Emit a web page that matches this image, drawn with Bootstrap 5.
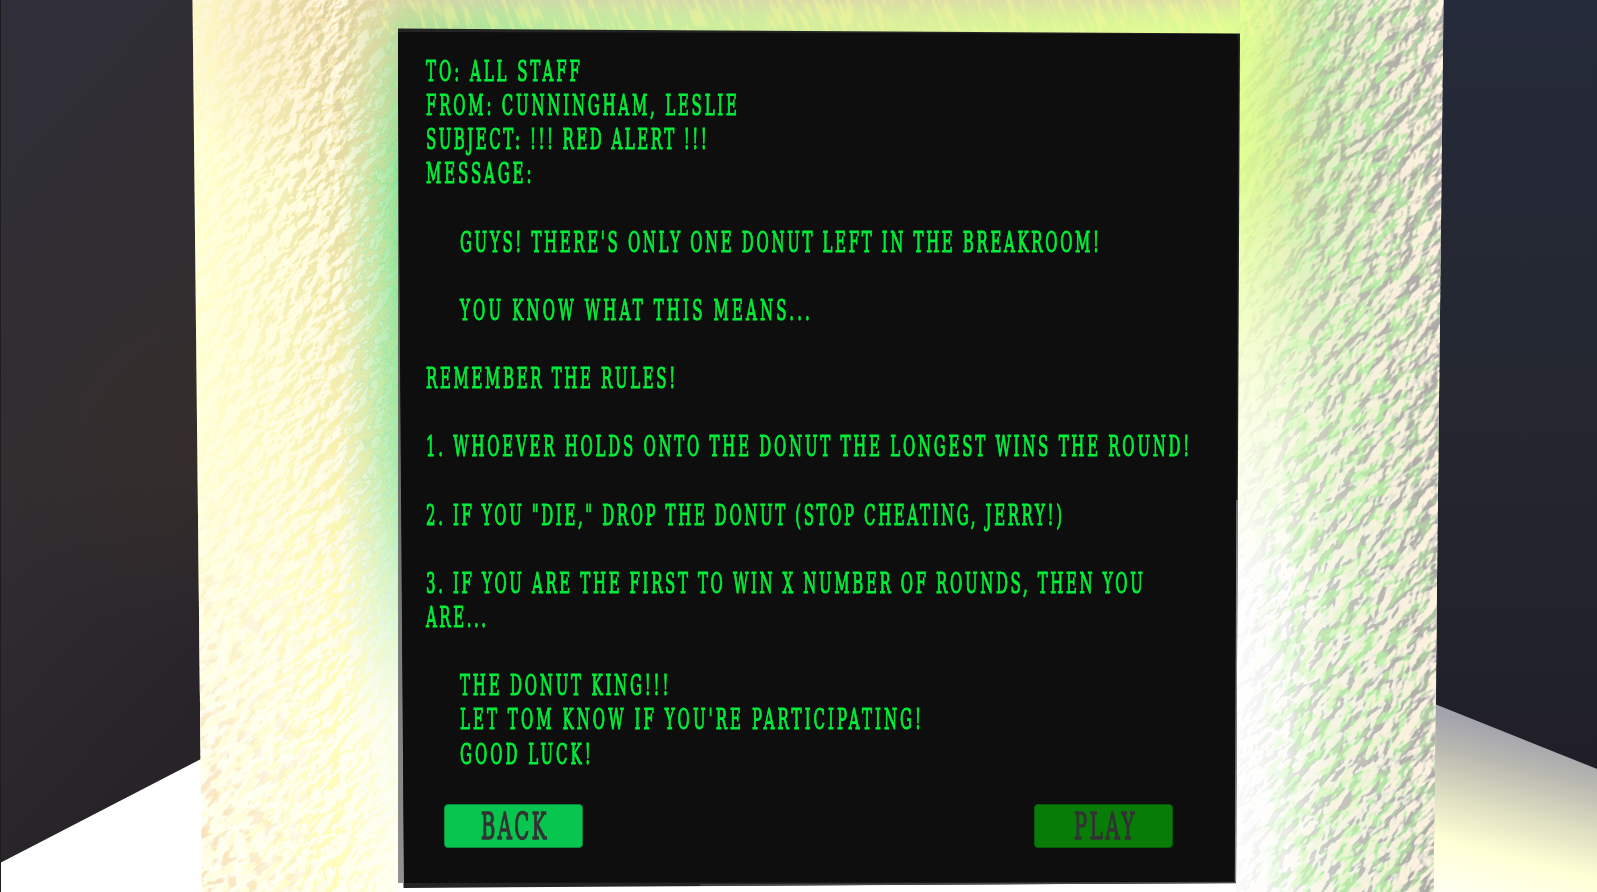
<!DOCTYPE html>
<html lang="en">
<head>
<meta charset="utf-8">
<meta name="viewport" content="width=device-width, initial-scale=1">
<title>Donut King</title>
<link href="https://cdn.jsdelivr.net/npm/bootstrap@5.3.0/dist/css/bootstrap.min.css" rel="stylesheet">
<style>
  body { width: 1597px; height: 892px; background: #fff; }
  .scene { width: 1597px; height: 892px; }
  .memo { width: 842px; height: 892px; margin-left: 398px; padding: 53.8px 28px 0; color: #00ee38;
    font-family: "DejaVu Serif", serif; }
  .memo-line { height: 34.15px; line-height: 35.5px; font-size: 28.8px; white-space: pre; }
  .memo-line.inset { padding-left: 34px; }
  .fit { display: inline-block; transform: scaleX(.52); transform-origin: 0 50%; -webkit-text-stroke: 1.15px currentColor; }
  .memo-actions { padding: 33.5px 39.2px 0 18.2px; }
  .memo .btn { width: 138.5px; height: 44px; padding: 0; border-radius: 4px; color: #333; text-align: left;
    font: 37.6px/43.5px "DejaVu Serif", serif; white-space: pre; display: block; }
  .btn-back { background: #07c64f; border: 1px solid #078b3b; }
  .btn-play { background: #077d07; border: 1px solid #075b08; }
  .memo .btn .fit { line-height: 43.5px; vertical-align: top; -webkit-text-stroke-width: 1.6px; }
</style>
</head>
<body class="m-0 overflow-hidden">
<main class="scene position-relative overflow-hidden">
  <svg class="position-absolute top-0 start-0" width="1597" height="892" viewBox="0 0 1597 892" aria-hidden="true">
    <defs>
      <linearGradient id="wallL" x1="0" y1="0" x2=".25" y2="1">
        <stop offset="0" stop-color="#302f39"/><stop offset=".55" stop-color="#312d30"/><stop offset="1" stop-color="#272329"/>
      </linearGradient>
      <radialGradient id="warm" gradientUnits="userSpaceOnUse" cx="200" cy="450" r="200">
        <stop offset="0" stop-color="#3a302b" stop-opacity=".6"/><stop offset="1" stop-color="#3a302b" stop-opacity="0"/>
      </radialGradient>
      <linearGradient id="wallR" x1="0" y1="0" x2="0" y2="1">
        <stop offset="0" stop-color="#252a3a"/><stop offset=".55" stop-color="#24272f"/><stop offset="1" stop-color="#201f28"/>
      </linearGradient>
      <linearGradient id="floorR" gradientUnits="userSpaceOnUse" x1="1500" y1="728" x2="1458" y2="892">
        <stop offset="0" stop-color="#a3a3ad"/><stop offset=".2" stop-color="#b9b9b1"/><stop offset=".5" stop-color="#e3e3c4"/><stop offset=".72" stop-color="#ffffd5"/><stop offset="1" stop-color="#fffff0"/>
      </linearGradient>
      <linearGradient id="stone" gradientUnits="userSpaceOnUse" x1="192" y1="0" x2="1443" y2="0">
        <stop offset="0" stop-color="#ffffd6"/><stop offset=".08" stop-color="#fffbd6"/><stop offset=".115" stop-color="#faf0c8"/><stop offset=".132" stop-color="#cfe5ad"/><stop offset=".163" stop-color="#86e394"/>
        <stop offset=".3" stop-color="#bde9a0"/><stop offset=".55" stop-color="#dcf09c"/><stop offset=".75" stop-color="#defa95"/><stop offset=".84" stop-color="#dfff92"/><stop offset=".87" stop-color="#d8f098"/><stop offset=".9" stop-color="#c5dfa2"/><stop offset=".95" stop-color="#cfd6bb"/><stop offset="1" stop-color="#d8cfc6"/>
      </linearGradient>
      <linearGradient id="washV" x1="0" y1="0" x2="0" y2="1">
        <stop offset=".2" stop-color="#fffff2" stop-opacity="0"/><stop offset=".5" stop-color="#fffff2" stop-opacity=".2"/><stop offset=".8" stop-color="#fffff4" stop-opacity=".95"/><stop offset="1" stop-color="#fffff4"/>
      </linearGradient>
      <linearGradient id="washR" x1="0" y1="0" x2="0" y2="1">
        <stop offset=".18" stop-color="#fffff0" stop-opacity="0"/><stop offset=".45" stop-color="#fffff0" stop-opacity=".85"/><stop offset=".65" stop-color="#fff"/>
      </linearGradient>
      <linearGradient id="fadeR" x1="0" y1="0" x2="1" y2="0">
        <stop offset="0" stop-color="#fff"/><stop offset=".25" stop-color="#fff"/><stop offset=".65" stop-color="#999"/><stop offset="1" stop-color="#222"/>
      </linearGradient>
      <linearGradient id="topHaze" x1="0" y1="0" x2="0" y2="1">
        <stop offset="0" stop-color="#dccfb0" stop-opacity=".65"/><stop offset="1" stop-color="#c9f595" stop-opacity="0"/>
      </linearGradient>
      <radialGradient id="peachTop" gradientUnits="userSpaceOnUse" cx="330" cy="0" r="190">
        <stop offset="0" stop-color="#f3d3a8" stop-opacity=".7"/><stop offset="1" stop-color="#f3d3a8" stop-opacity="0"/>
      </radialGradient>
      <linearGradient id="gL" gradientUnits="userSpaceOnUse" x1="192" y1="0" x2="400" y2="0">
        <stop offset="0" stop-color="#444"/><stop offset=".4" stop-color="#999"/><stop offset=".7" stop-color="#fff"/><stop offset=".8" stop-color="#aaa"/><stop offset="1" stop-color="#222"/>
      </linearGradient>
      <linearGradient id="gOlive" gradientUnits="userSpaceOnUse" x1="192" y1="0" x2="400" y2="0">
        <stop offset=".1" stop-color="#000"/><stop offset=".4" stop-color="#555"/><stop offset=".7" stop-color="#ccc"/><stop offset="1" stop-color="#333"/>
      </linearGradient>
      <linearGradient id="gR" gradientUnits="userSpaceOnUse" x1="1240" y1="0" x2="1443" y2="0">
        <stop offset="0" stop-color="#111"/><stop offset=".2" stop-color="#333"/><stop offset=".45" stop-color="#999"/><stop offset="1" stop-color="#fff"/>
      </linearGradient>
      <linearGradient id="gGreen" gradientUnits="userSpaceOnUse" x1="1240" y1="0" x2="1443" y2="0">
        <stop offset=".05" stop-color="#000"/><stop offset=".35" stop-color="#ccc"/><stop offset=".7" stop-color="#fff"/><stop offset="1" stop-color="#666"/>
      </linearGradient>
      <linearGradient id="gTop" x1="0" y1="0" x2="0" y2="1">
        <stop offset="0" stop-color="#fff"/><stop offset=".4" stop-color="#555"/><stop offset=".65" stop-color="#000"/>
      </linearGradient>
      <linearGradient id="gBottom" x1="0" y1="0" x2="0" y2="1">
        <stop offset=".5" stop-color="#000"/><stop offset="1" stop-color="#fff"/>
      </linearGradient>
      <linearGradient id="gBottomX" x1="0" y1="0" x2="1" y2="0">
        <stop offset="0" stop-color="#fff"/><stop offset="1" stop-color="#000"/>
      </linearGradient>
      <linearGradient id="side" x1="0" y1="0" x2="0" y2="1">
        <stop offset="0" stop-color="#444b40"/><stop offset=".5" stop-color="#6c7168"/><stop offset="1" stop-color="#929292"/>
      </linearGradient>
      <mask id="mL"><rect x="190" width="212" height="892" fill="url(#gL)"/></mask>
      <mask id="mOlive"><rect x="190" width="212" height="892" fill="url(#gOlive)"/></mask>
      <mask id="mLTop"><rect x="190" width="212" height="892" fill="url(#gTop)"/></mask>
      <mask id="mR"><rect x="1236" width="208" height="892" fill="url(#gR)"/></mask>
      <mask id="mGreen"><rect x="1236" width="208" height="892" fill="url(#gGreen)"/></mask>
      <mask id="mBottom"><rect x="190" width="150" height="892" fill="url(#gBottom)"/></mask>
      <mask id="mBottomX"><rect x="190" width="150" height="892" fill="url(#gBottomX)"/></mask>
      <mask id="mWashR"><rect x="1230" width="214" height="892" fill="url(#fadeR)"/></mask>
      <clipPath id="pillar"><path d="M192.5 0H1443.5L1433.5 892H202Z"/></clipPath>
      <!-- embossed plaster: lit turbulence split into highlight and shadow strokes -->
      <filter id="pale" x="0" y="0" width="1" height="1" color-interpolation-filters="sRGB">
        <feTurbulence type="fractalNoise" baseFrequency=".055 .085" numOctaves="3" seed="4"/>
        <feDiffuseLighting surfaceScale="9" lighting-color="#fff" diffuseConstant="1"><feDistantLight azimuth="80" elevation="45"/></feDiffuseLighting>
        <feColorMatrix values="0 0 0 0 1  0 0 0 0 1  0 0 0 0 .92  5 0 0 0 -3.4"/>
      </filter>
      <filter id="yellow" x="0" y="0" width="1" height="1" color-interpolation-filters="sRGB">
        <feTurbulence type="fractalNoise" baseFrequency=".055 .085" numOctaves="3" seed="4"/>
        <feDiffuseLighting surfaceScale="9" lighting-color="#fff" diffuseConstant="1"><feDistantLight azimuth="80" elevation="45"/></feDiffuseLighting>
        <feColorMatrix values="0 0 0 0 1  0 0 0 0 .99  0 0 0 0 .68  -5 0 0 0 3.2"/>
      </filter>
      <filter id="olive" x="0" y="0" width="1" height="1" color-interpolation-filters="sRGB">
        <feTurbulence type="fractalNoise" baseFrequency=".055 .085" numOctaves="3" seed="4"/>
        <feDiffuseLighting surfaceScale="9" lighting-color="#fff" diffuseConstant="1"><feDistantLight azimuth="80" elevation="45"/></feDiffuseLighting>
        <feColorMatrix values="0 0 0 0 .82  0 0 0 0 .77  0 0 0 0 .62  -5 0 0 0 2.7"/>
      </filter>
      <filter id="shade" x="0" y="0" width="1" height="1" color-interpolation-filters="sRGB">
        <feTurbulence type="fractalNoise" baseFrequency=".045 .075" numOctaves="3" seed="7"/>
        <feDiffuseLighting surfaceScale="10" lighting-color="#fff" diffuseConstant="1"><feDistantLight azimuth="80" elevation="45"/></feDiffuseLighting>
        <feColorMatrix values="0 0 0 0 .67  0 0 0 0 .66  0 0 0 0 .65  -3 0 0 0 1.8"/>
      </filter>
      <filter id="light" x="0" y="0" width="1" height="1" color-interpolation-filters="sRGB">
        <feTurbulence type="fractalNoise" baseFrequency=".045 .075" numOctaves="3" seed="7"/>
        <feDiffuseLighting surfaceScale="10" lighting-color="#fff" diffuseConstant="1"><feDistantLight azimuth="80" elevation="45"/></feDiffuseLighting>
        <feColorMatrix values="0 0 0 0 1  0 0 0 0 .95  0 0 0 0 .88  5 0 0 0 -3.5"/>
      </filter>
      <filter id="green" x="0" y="0" width="1" height="1" color-interpolation-filters="sRGB">
        <feTurbulence type="fractalNoise" baseFrequency=".05 .1" numOctaves="3" seed="21"/>
        <feColorMatrix values="0 0 0 0 .72  0 0 0 0 .98  0 0 0 0 .64  7 0 0 0 -3.2"/>
      </filter>
      <filter id="tan" x="0" y="0" width="1" height="1" color-interpolation-filters="sRGB">
        <feTurbulence type="fractalNoise" baseFrequency=".06 .13" numOctaves="3" seed="33"/>
        <feColorMatrix values="0 0 0 0 .96  0 0 0 0 .82  0 0 0 0 .62  7 0 0 0 -3.7"/>
      </filter>
      <filter id="streak" x="0" y="0" width="1" height="1" color-interpolation-filters="sRGB">
        <feTurbulence type="fractalNoise" baseFrequency=".16 .035" numOctaves="2" seed="5"/>
        <feColorMatrix values="0 0 0 0 1  0 0 0 0 .98  0 0 0 0 .6  5 0 0 0 -2.4"/>
      </filter>
    </defs>

    <rect width="1597" height="892" fill="#fff"/>
    <path d="M0 0H196L201 759L0 863Z" fill="url(#wallL)"/>
    <path d="M0 0H196L201 759L0 863Z" fill="url(#warm)"/>
    <path d="M0 0H1V892H0Z" fill="#1d1d1d"/>
    <path d="M1430 700L1597 769V892H1430Z" fill="url(#floorR)"/>
    <path d="M1440 0H1597V769L1436 704.500Z" fill="url(#wallR)"/>

    <g clip-path="url(#pillar)">
      <rect x="190" width="1256" height="892" fill="url(#stone)"/>
      <rect x="350" width="890" height="34" fill="url(#topHaze)"/>
      <rect x="190" width="340" height="200" fill="url(#peachTop)"/>
      <rect x="190" width="215" height="892" fill="url(#washV)"/>
      <g mask="url(#mWashR)"><rect x="1230" width="214" height="892" fill="url(#washR)"/></g>
      <rect x="398" y="870" width="842" height="22" fill="#fff"/>

      <g mask="url(#mR)"><g transform="rotate(-50 1340 446)">
        <rect x="850" y="-50" width="980" height="992" filter="url(#shade)"/>
      </g></g>
      <g mask="url(#mGreen)"><g transform="rotate(-50 1340 446)"><rect x="850" y="-50" width="980" height="992" filter="url(#green)" opacity=".7"/></g></g>
      <g mask="url(#mR)"><g transform="rotate(-50 1340 446)">
        <rect x="850" y="-50" width="980" height="992" filter="url(#light)"/>
      </g></g>
      <g mask="url(#mL)"><g transform="rotate(-48 300 446)" opacity=".8">
        <rect x="-190" y="-50" width="980" height="992" filter="url(#yellow)"/>
        <rect x="-190" y="-50" width="980" height="992" filter="url(#pale)"/>
      </g></g>
      <g mask="url(#mLTop)"><g mask="url(#mOlive)"><g transform="rotate(-48 300 446)">
        <rect x="-190" y="-50" width="980" height="992" filter="url(#olive)"/>
      </g></g></g>
      <g mask="url(#mBottomX)"><g mask="url(#mBottom)" opacity=".75"><g transform="rotate(-45 300 446)"><rect x="-190" y="-50" width="980" height="992" filter="url(#tan)"/></g></g></g>
      <g transform="skewX(20)" opacity=".4"><rect x="370" y="0" width="900" height="34" filter="url(#streak)"/></g>
    </g>

    <path d="M398 60L403.500 883H398Z" fill="#848484"/>
    <path d="M398 28.500L1240 33.500L1236 883L403.500 888Z" fill="#242424"/>
    <path d="M398 100L404 883H398Z" fill="url(#side)"/>
    <path d="M398 32L1237 34L1238.500 40L1234.500 882L404 883L398 100Z" fill="#0e0e0e"/>
    <path d="M1237 500L1235.500 883" stroke="#888" stroke-width="1.300"/>
    <path d="M700 885L1236 882.500" stroke="#4a4a4a" stroke-width="1.500"/>
  </svg>

  <section class="memo position-relative">
    <div class="memo-line"><span class="fit" data-w="154">TO: ALL STAFF</span></div>
    <div class="memo-line"><span class="fit" data-w="311">FROM: CUNNINGHAM, LESLIE</span></div>
    <div class="memo-line"><span class="fit" data-w="281">SUBJECT: !!! RED ALERT !!!</span></div>
    <div class="memo-line"><span class="fit" data-w="105.500">MESSAGE:</span></div>
    <div class="memo-line"></div>
    <div class="memo-line inset"><span class="fit" data-w="639">GUYS! THERE'S ONLY ONE DONUT LEFT IN THE BREAKROOM!</span></div>
    <div class="memo-line"></div>
    <div class="memo-line inset"><span class="fit" data-w="350">YOU KNOW WHAT THIS MEANS...</span></div>
    <div class="memo-line"></div>
    <div class="memo-line"><span class="fit" data-w="249.500">REMEMBER THE RULES!</span></div>
    <div class="memo-line"></div>
    <div class="memo-line"><span class="fit" data-w="763.500">1. WHOEVER HOLDS ONTO THE DONUT THE LONGEST WINS THE ROUND!</span></div>
    <div class="memo-line"></div>
    <div class="memo-line"><span class="fit" data-w="636">2. IF YOU "DIE," DROP THE DONUT (STOP CHEATING, JERRY!)</span></div>
    <div class="memo-line"></div>
    <div class="memo-line"><span class="fit" data-w="717">3. IF YOU ARE THE FIRST TO WIN X NUMBER OF ROUNDS, THEN YOU</span></div>
    <div class="memo-line"><span class="fit" data-w="60">ARE...</span></div>
    <div class="memo-line"></div>
    <div class="memo-line inset"><span class="fit" data-w="208.500">THE DONUT KING!!!</span></div>
    <div class="memo-line inset"><span class="fit" data-w="461">LET TOM KNOW IF YOU'RE PARTICIPATING!</span></div>
    <div class="memo-line inset"><span class="fit" data-w="130.500">GOOD LUCK!</span></div>
    <div class="memo-actions d-flex justify-content-between">
      <button type="button" class="btn btn-back"><span class="fit ms-0" style="margin-left:36px!important" data-w="65.500">BACK</span></button>
      <button type="button" class="btn btn-play"><span class="fit ms-0" style="margin-left:39px!important" data-w="60.500">PLAY</span></button>
    </div>
  </section>
</main>
<script src="https://cdn.jsdelivr.net/npm/bootstrap@5.3.0/dist/js/bootstrap.bundle.min.js"></script>
<script>
  // Track each condensed line out to its set width
  document.querySelectorAll('.fit').forEach(function (el) {
    el.style.letterSpacing = '0px';
    var gap = (el.dataset.w / .52 - el.offsetWidth) / (el.textContent.length - 1);
    el.style.letterSpacing = gap.toFixed(3) + 'px';
    el.style.marginRight = '-600px';
  });
</script>
</body>
</html>
